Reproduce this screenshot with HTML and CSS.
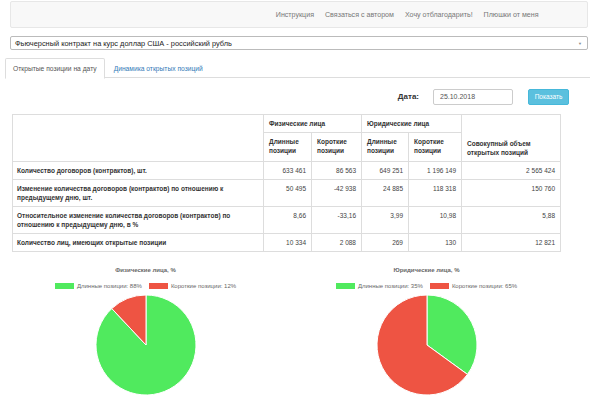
FILE: index.html
```html
<!DOCTYPE html>
<html lang="ru">
<head>
<meta charset="utf-8">
<title>Открытые позиции</title>
<link rel="stylesheet" href="styles.css">
</head>
<body>
<nav class="navbar">
  <ul class="nav-links">
    <li><a href="#">Инструкция</a></li>
    <li><a href="#">Связаться с автором</a></li>
    <li><a href="#">Хочу отблагодарить!</a></li>
    <li><a href="#">Плюшки от меня</a></li>
  </ul>
</nav>

<div class="select">
  <span class="select-text">Фьючерсный контракт на курс доллар США - российский рубль</span>
  <span class="caret">▼</span>
</div>

<ul class="tabs">
  <li class="tab active">Открытые позиции на дату</li>
  <li class="tab"><a href="#">Динамика открытых позиций</a></li>
</ul>

<div class="date-row">
  <label class="date-label">Дата:</label>
  <div class="date-input">25.10.2018</div>
  <button class="btn-show">Показать</button>
</div>

<table class="data">
  <colgroup>
    <col class="c-label"><col class="c-fl"><col class="c-fs"><col class="c-jl"><col class="c-js"><col class="c-tot">
  </colgroup>
  <thead>
    <tr>
      <th rowspan="2"></th>
      <th colspan="2">Физические лица</th>
      <th colspan="2">Юридические лица</th>
      <th rowspan="2" class="th-bottom">Совокупный объем<br>открытых позиций</th>
    </tr>
    <tr class="sub">
      <th>Длинные<br>позиции</th>
      <th>Короткие<br>позиции</th>
      <th>Длинные<br>позиции</th>
      <th>Короткие<br>позиции</th>
    </tr>
  </thead>
  <tbody>
    <tr>
      <th>Количество договоров (контрактов), шт.</th>
      <td>633 461</td><td>86 563</td><td>649 251</td><td>1 196 149</td><td>2 565 424</td>
    </tr>
    <tr>
      <th>Изменение количества договоров (контрактов) по отношению к<br>предыдущему дню, шт.</th>
      <td>50 495</td><td>-42 938</td><td>24 885</td><td>118 318</td><td>150 760</td>
    </tr>
    <tr>
      <th>Относительное изменение количества договоров (контрактов) по<br>отношению к предыдущему дню, в %</th>
      <td>8,66</td><td>-33,16</td><td>3,99</td><td>10,98</td><td>5,88</td>
    </tr>
    <tr>
      <th>Количество лиц, имеющих открытые позиции</th>
      <td>10 334</td><td>2 088</td><td>269</td><td>130</td><td>12 821</td>
    </tr>
  </tbody>
</table>

<div class="charts">
  <div class="chart">
    <div class="chart-title">Физические лица, %</div>
    <div class="legend">
      <span class="legend-item"><span class="box green"></span>Длинные позиции: 88%</span>
      <span class="legend-item"><span class="box red"></span>Короткие позиции: 12%</span>
    </div>
    <svg class="pie" width="102" height="102" viewBox="0 0 102 102">
      <path class="s-green" d="M51,51 L51,1 A50,50 0 1,1 16.77,14.55 Z"/>
      <path class="s-red" d="M51,51 L16.77,14.55 A50,50 0 0,1 51,1 Z"/>
    </svg>
  </div>
  <div class="chart">
    <div class="chart-title">Юридические лица, %</div>
    <div class="legend">
      <span class="legend-item"><span class="box green"></span>Длинные позиции: 35%</span>
      <span class="legend-item"><span class="box red"></span>Короткие позиции: 65%</span>
    </div>
    <svg class="pie" width="102" height="102" viewBox="0 0 102 102">
      <path class="s-green" d="M51,51 L51,1 A50,50 0 0,1 91.45,80.39 Z"/>
      <path class="s-red" d="M51,51 L91.45,80.39 A50,50 0 1,1 51,1 Z"/>
    </svg>
  </div>
</div>
</body>
</html>
```

FILE: styles.css
```css
* { box-sizing: border-box; }
html, body { margin: 0; padding: 0; background: #fff; }
body {
  font-family: "Liberation Sans", Arial, sans-serif;
  font-size: 7px;
  color: #333;
  width: 590px;
  overflow: hidden;
}
a { text-decoration: none; }

.navbar {
  margin: 1px 2px 0 10px;
  height: 27px;
  background: #f8f8f8;
  border: 1px solid #e7e7e7;
  border-radius: 2px;
  display: flex;
  justify-content: flex-end;
  align-items: center;
}
.nav-links {
  list-style: none;
  margin: 0 43px 0 0;
  padding: 0;
  display: flex;
}
.nav-links a {
  display: block;
  padding: 0 5.5px;
  color: #777;
  font-size: 7.1px;
  line-height: 10px;
}

.select {
  margin: 8px 2px 0 10px;
  height: 14px;
  border: 1px solid #bbb;
  border-radius: 2px;
  display: flex;
  align-items: center;
  justify-content: space-between;
  padding: 0 5px 0 4px;
  font-size: 7.4px;
  color: #222;
}
.caret { font-size: 4px; color: #888; }

.tabs {
  list-style: none;
  margin: 8px 0 0 5px;
  padding: 0;
  display: flex;
  border-bottom: 1px solid #ddd;
  height: 20px;
}
.tab {
  height: 21px;
  padding: 0 7px;
  display: flex;
  align-items: center;
  font-size: 6.7px;
  color: #555;
  border: 1px solid transparent;
  border-radius: 2px 2px 0 0;
  margin-right: 1px;
}
.tab.active {
  border-color: #ddd #ddd transparent #ddd;
  background: #fff;
}
.tab a { color: #337ab7; }

.date-row {
  display: flex;
  align-items: center;
  justify-content: flex-end;
  margin: 10px 21px 0 0;
  height: 17px;
}
.date-label {
  font-weight: bold;
  font-size: 8px;
  margin-right: 14px;
  color: #333;
}
.date-input {
  width: 80px;
  height: 16px;
  border: 1px solid #ccc;
  border-radius: 2px;
  padding: 0 6px;
  display: flex;
  align-items: center;
  font-size: 7px;
  color: #555;
  margin-right: 15px;
}
.btn-show {
  width: 41px;
  height: 16px;
  background: #5bc0de;
  border: 1px solid #46b8da;
  border-radius: 2px;
  color: #fff;
  font-family: inherit;
  font-size: 6.5px;
  padding: 0;
}

.data {
  margin: 9px 0 0 12px;
  width: 548px;
  border-collapse: collapse;
  table-layout: fixed;
  font-size: 6.5px;
}
.c-label { width: 251px; }
.c-fl { width: 48px; }
.c-fs { width: 50px; }
.c-jl { width: 47px; }
.c-js { width: 53px; }
.c-tot { width: 99px; }
.data th, .data td {
  border: 1px solid #ddd;
  padding: 4px 5px 4px 4px;
  line-height: 9px;
}
.data thead th {
  text-align: left;
  vertical-align: bottom;
  font-weight: bold;
  padding-left: 5px;
}
.data thead .sub th { padding-bottom: 6px; }
.data tbody th {
  text-align: left;
  font-weight: bold;
  vertical-align: top;
}
.data td {
  text-align: right;
  vertical-align: top;
  color: #444;
}

.charts {
  display: flex;
  margin: 13px 0 0 5px;
  width: 562px;
}
.chart {
  flex: 1;
  display: flex;
  flex-direction: column;
  align-items: center;
}
.chart-title {
  font-weight: bold;
  font-size: 6px;
  color: #666;
  line-height: 10px;
}
.legend {
  display: flex;
  gap: 7px;
  margin-top: 7px;
  font-size: 6px;
  color: #666;
  line-height: 8px;
}
.legend-item { display: flex; align-items: center; }
.box {
  display: inline-block;
  width: 19px;
  height: 6px;
  margin-right: 3px;
}
.box.green { background: #50ea5e; }
.box.red { background: #ee5443; }
.pie { margin-top: 4px; display: block; }
.s-green { fill: #50ea5e; stroke: #fff; stroke-width: 1; }
.s-red { fill: #ee5443; stroke: #fff; stroke-width: 1; }
```
